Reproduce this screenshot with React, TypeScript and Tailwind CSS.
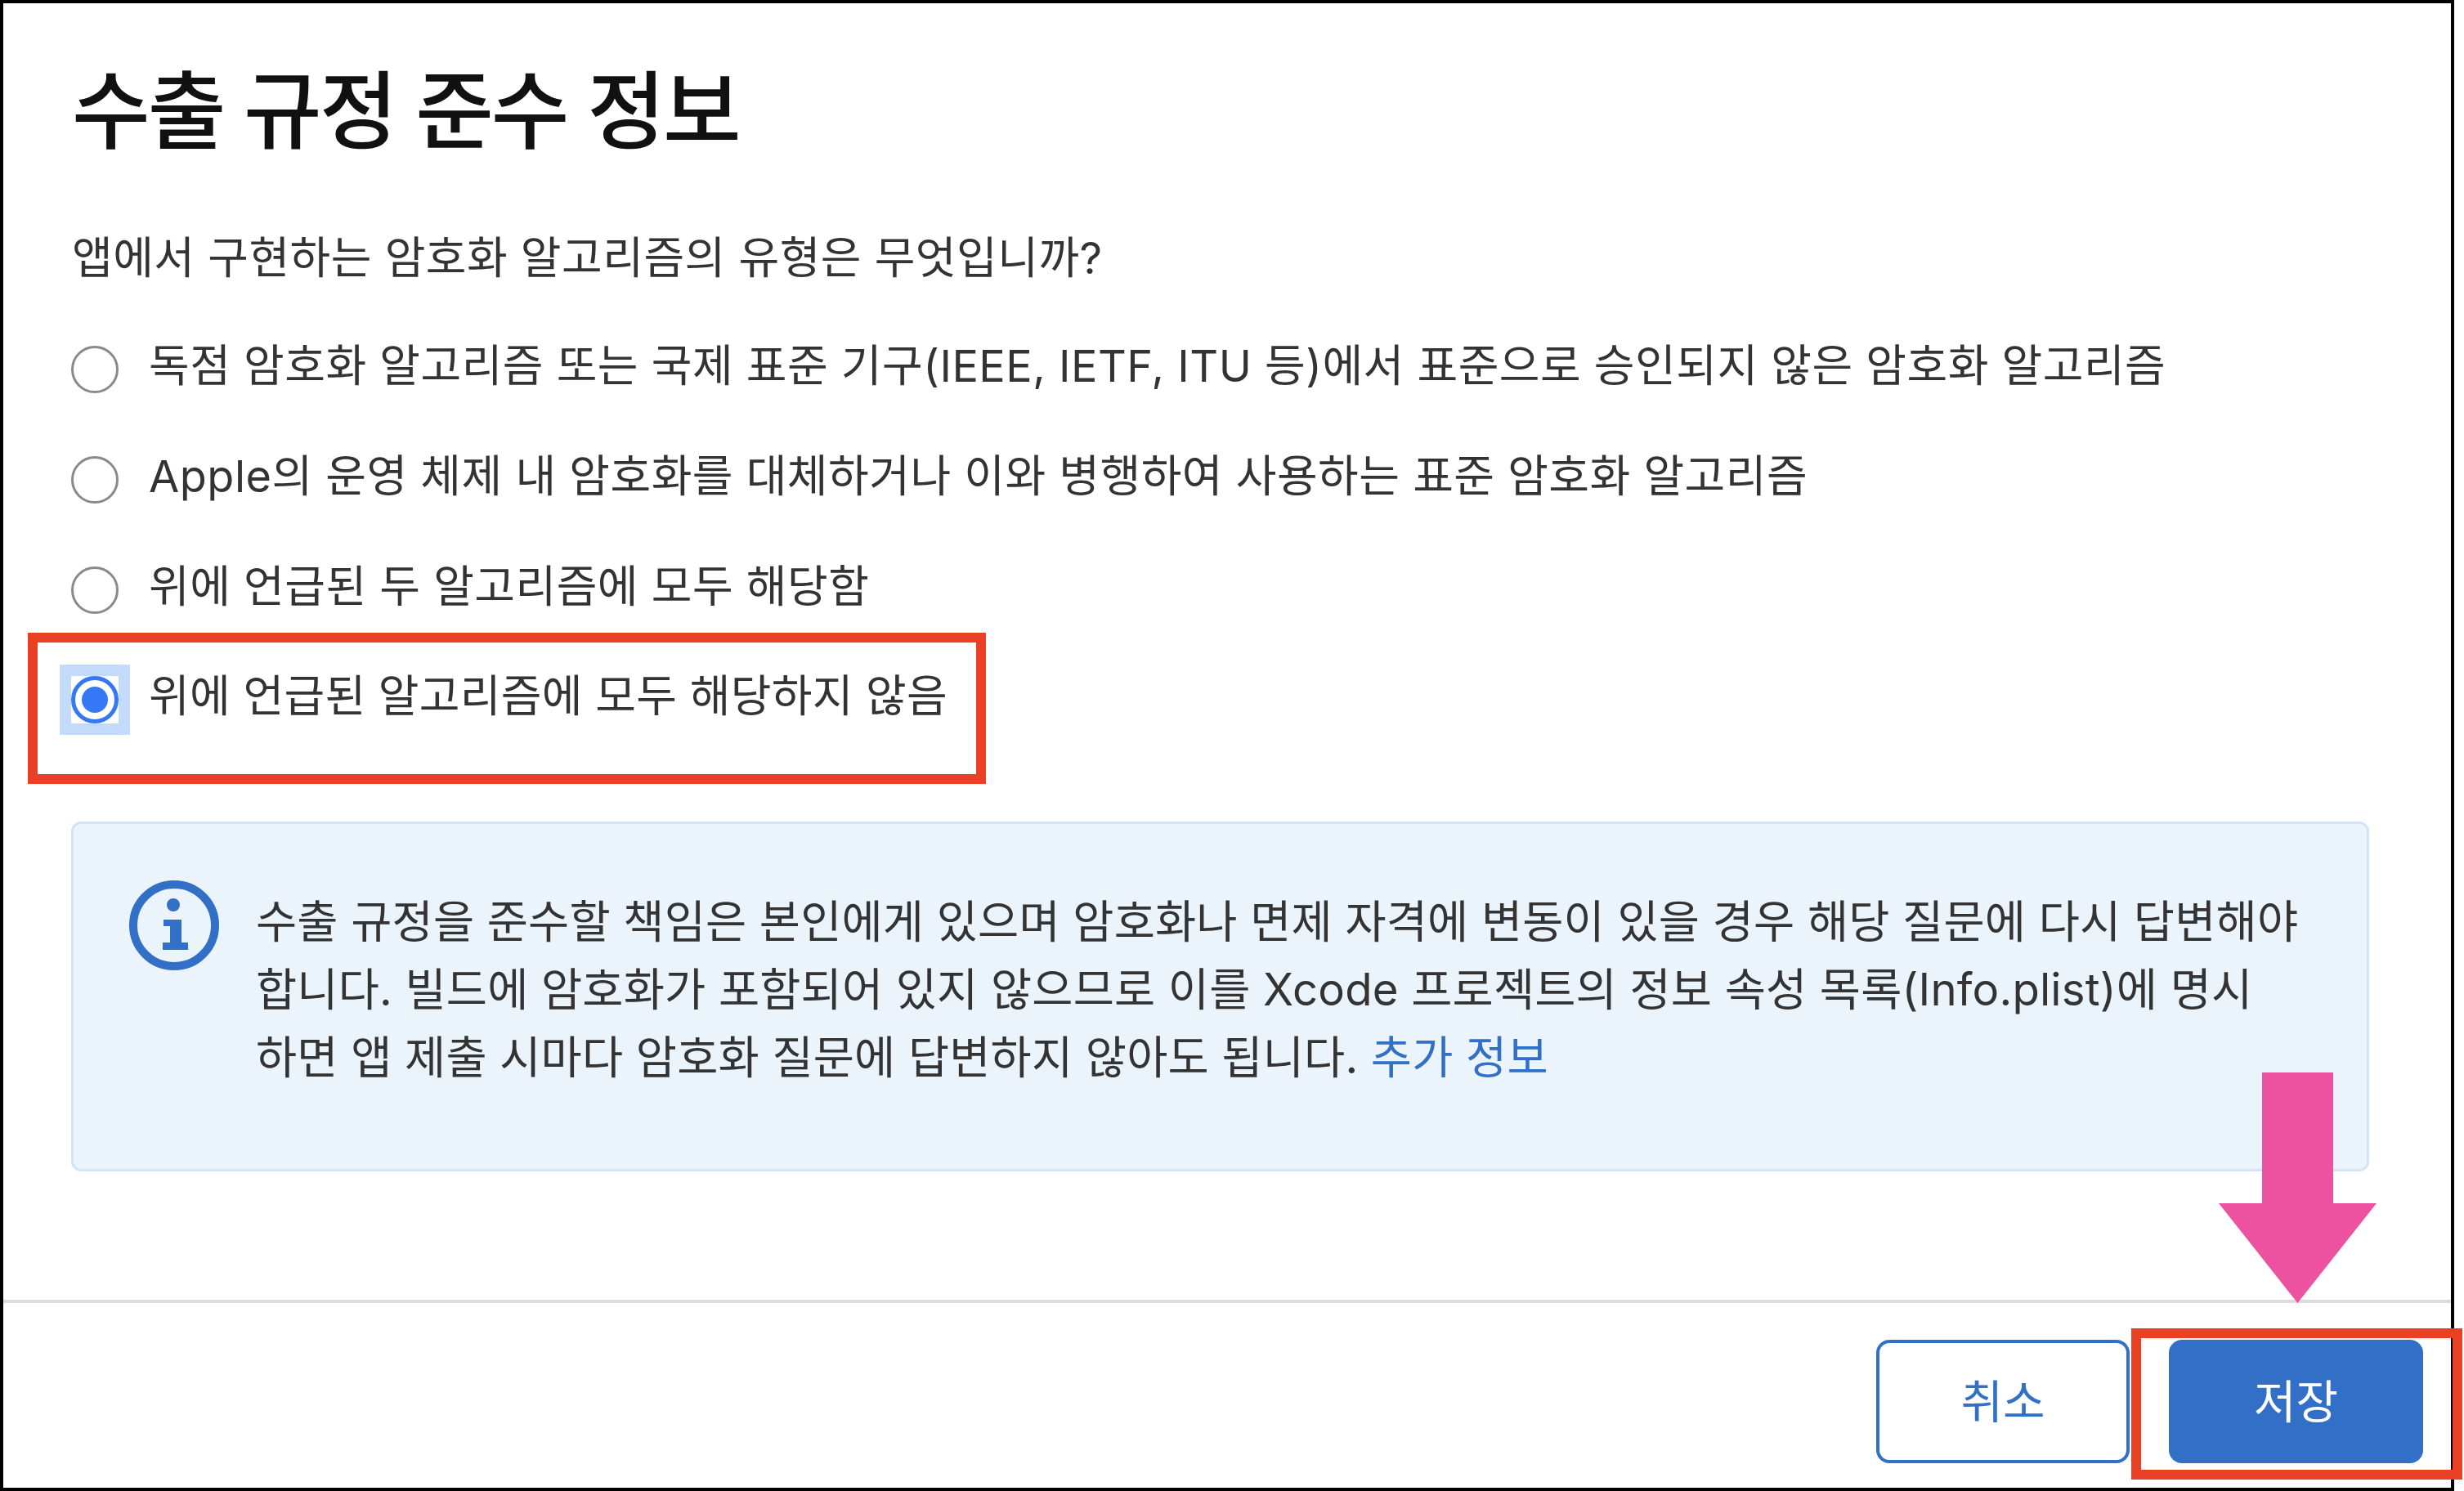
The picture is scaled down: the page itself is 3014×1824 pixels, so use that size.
const font = "font-['Inter','Noto_Sans_CJK_KR',sans-serif]";

function Radio({ checked }: { checked?: boolean }) {
  if (checked) {
    return (
      <span className="-ml-px mt-[9px] flex h-[58px] w-[58px] shrink-0 items-center justify-center bg-white shadow-[0_0_0_14px_#c3dafa]">
        <span className="flex h-[58px] w-[58px] items-center justify-center rounded-full border-[5px] border-[#3478f6] bg-white">
          <span className="h-[32px] w-[32px] rounded-full bg-[#3478f6]" />
        </span>
      </span>
    );
  }
  return <span className="-ml-px mt-[9px] h-[58px] w-[58px] shrink-0 rounded-full border-[3px] border-[#8a8a8a] bg-white" />;
}

const options = [
  "독점 암호화 알고리즘 또는 국제 표준 기구(IEEE, IETF, ITU 등)에서 표준으로 승인되지 않은 암호화 알고리즘",
  "Apple의 운영 체제 내 암호화를 대체하거나 이와 병행하여 사용하는 표준 암호화 알고리즘",
  "위에 언급된 두 알고리즘에 모두 해당함",
];

export default function App() {
  return (
    <div className={`${font} relative h-[1824px] w-[3014px] overflow-hidden bg-white text-[#333333]`}>
      <div className="flex h-full w-[3002px] flex-col border-[4px] border-black">
        <div className="flex-1 pl-[84px] pr-[100px] pt-[67px]">
          <h1 className="text-[104px] font-medium leading-[130px] tracking-[-3px] text-[#111111]">수출 규정 준수 정보</h1>
          <p className="mt-[81px] text-[54px] leading-[68px] tracking-[0.5px]">앱에서 구현하는 암호화 알고리즘의 유형은 무엇입니까?</p>
          <div className="mt-[64px] flex flex-col gap-[67px]">
            {options.map((label) => (
              <div key={label} className="flex items-start gap-[37px] text-[54px] leading-[68px] tracking-[0.5px]">
                <Radio />
                <span>{label}</span>
              </div>
            ))}
          </div>
          {/* Selected option with the red callout */}
          <div className="-ml-[54px] mt-[22px] h-[185px] w-[1172px] border-[12px] border-[#ea4025] pl-[42px] pt-[32px]">
            <div className="flex items-start gap-[37px] text-[54px] leading-[68px] tracking-[0.3px]">
              <Radio checked />
              <span>위에 언급된 알고리즘에 모두 해당하지 않음</span>
            </div>
          </div>
          <div className="-ml-px mt-[46px] flex h-[428px] gap-[45px] rounded-[12px] border-[3px] border-[#d5e4f5] bg-[#ebf3fb] pl-[68px] pt-[69px]">
            <svg viewBox="0 0 110 110" className="h-[110px] w-[110px] shrink-0">
              <circle cx="55" cy="55" r="50" fill="none" stroke="#3170c6" strokeWidth="10" />
              <circle cx="54" cy="30" r="8" fill="#3170c6" />
              <path d="M42 48h22v28h8v9H41v-9h9V56h-8z" fill="#3170c6" />
            </svg>
            <p className="mt-[9px] whitespace-nowrap text-[54.5px] leading-[83px] tracking-[0.2px]">
              수출 규정을 준수할 책임은 본인에게 있으며 암호화나 면제 자격에 변동이 있을 경우 해당 질문에 다시 답변해야
              <br />
              합니다. 빌드에 암호화가 포함되어 있지 않으므로 이를 Xcode 프로젝트의 정보 속성 목록(Info.plist)에 명시
              <br />
              하면 앱 제출 시마다 암호화 질문에 답변하지 않아도 됩니다. <span className="text-[#3170c6]">추가 정보</span>
            </p>
          </div>
        </div>
        <div className="flex h-[230px] items-start justify-end gap-[48px] border-t-[4px] border-[#dcdcdc] pr-[34px] pt-[45px]">
          <button className="h-[151px] w-[310px] rounded-[16px] border-[4px] border-[#3170c6] bg-white text-[56px] text-[#3170c6]">취소</button>
          <button className="h-[151px] w-[311px] rounded-[16px] bg-[#3170c6] text-[56px] text-white">저장</button>
        </div>
      </div>
      {/* Red callout around the save button */}
      <div className="absolute bottom-[14px] right-[2px] h-[185px] w-[405px] border-[12px] border-[#ea4025]" />
      {/* Pink arrow pointing at the save button */}
      <svg viewBox="0 0 193 282" className="absolute right-[107px] top-[1312px] h-[282px] w-[193px]">
        <path d="M53 0h87v160h53L96.5 282 0 160h53z" fill="#ec52a0" />
      </svg>
    </div>
  );
}
